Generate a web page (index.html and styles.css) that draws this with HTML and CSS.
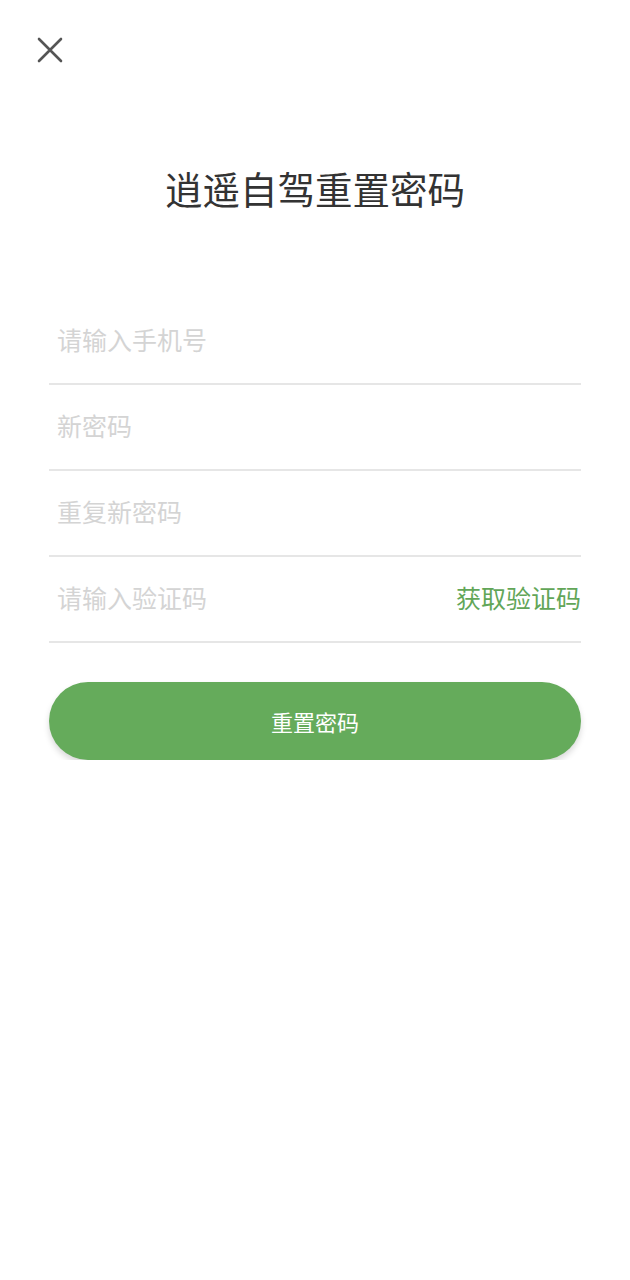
FILE: index.html
```html
<!DOCTYPE html>
<html lang="zh-CN">
<head>
    <meta charset="UTF-8">
    <meta name="viewport" content="width=device-width, initial-scale=1.0">
    <title>逍遥自驾重置密码</title>
    <link rel="stylesheet" href="styles.css">
</head>
<body>

    <div class="top-bar">
        <button class="close-btn" aria-label="关闭">
            <svg width="26" height="26" viewBox="0 0 26 26">
                <path d="M2 2 L24 24 M24 2 L2 24" stroke="#555" stroke-width="2.6" stroke-linecap="round" fill="none"/>
            </svg>
        </button>
    </div>

    <h1 class="title">逍遥自驾重置密码</h1>

    <form class="form">
        <div class="field">
            <input type="tel" placeholder="请输入手机号">
        </div>
        <div class="field">
            <input type="password" placeholder="新密码">
        </div>
        <div class="field">
            <input type="password" placeholder="重复新密码">
        </div>
        <div class="field">
            <input type="text" placeholder="请输入验证码">
            <span class="get-code">获取验证码</span>
        </div>
        <button type="button" class="submit-btn">重置密码</button>
    </form>

</body>
</html>
```

FILE: styles.css
```css
body {
    font-family: "Noto Sans CJK SC", "Noto Sans", sans-serif;
    margin: 0;
    background-color: #fff;
}
.top-bar {
    padding: 37px 0 0 37px;
}
.close-btn {
    display: block;
    width: 26px;
    height: 26px;
    padding: 0;
    border: none;
    background: none;
    cursor: pointer;
}
.close-btn svg {
    display: block;
}
.title {
    margin: 100px 0 0;
    font-size: 37.5px;
    line-height: 50px;
    font-weight: 400;
    color: #333;
    text-align: center;
}
.form {
    margin: 86px 49px 0;
}
.field {
    display: flex;
    align-items: center;
    height: 84px;
    border-bottom: 2px solid #e6e6e6;
}
.field input {
    flex: 1;
    min-width: 0;
    height: 100%;
    padding: 0 0 4px 8px;
    border: none;
    outline: none;
    background: none;
    font-family: inherit;
    font-size: 25px;
    color: #333;
}
.field input::placeholder {
    color: #d4d4d4;
}
.get-code {
    padding-bottom: 4px;
    font-size: 25px;
    color: #62a658;
    cursor: pointer;
}
.submit-btn {
    display: block;
    width: 100%;
    height: 78px;
    margin-top: 39px;
    border: none;
    border-radius: 39px;
    background-color: #65ab5b;
    box-shadow: 0 4px 6px rgba(0, 0, 0, 0.15);
    color: #fff;
    font-family: inherit;
    font-size: 22px;
    cursor: pointer;
}
```
